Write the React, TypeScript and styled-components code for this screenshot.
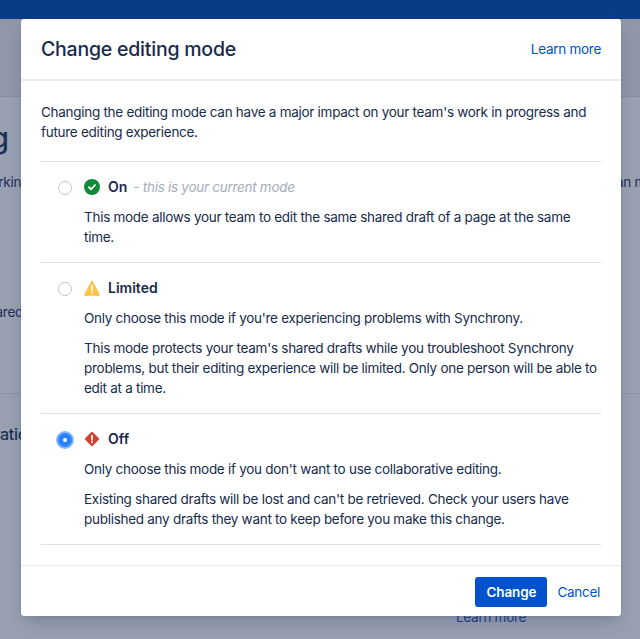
import React from "react";
import styled, {createGlobalStyle} from "styled-components";

const GlobalStyle = createGlobalStyle`
    html, body {
        margin: 0;
        padding: 0;
        background: #9aa2b3;
    }
    body {
        font-family: Inter, "Liberation Sans", sans-serif;
        font-size: 13.5px;
        letter-spacing: -0.28px;
        line-height: 20px;
        color: #172b4d;
    }
`;

const Page = styled.div`
    position: relative;
    width: 640px;
    height: 639px;
    overflow: hidden;
    display: flex;
    flex-direction: column;
    background: #98a0b1;
`;

const TopBar = styled.div`
    height: 19px;
    flex: none;
    background: #0a3b85;
`;

const PageHead = styled.div`
    height: 77px;
    flex: none;
    background: #8f97a8;
    border-bottom: 1px solid #868e9f;
`;

const PageSection = styled.div<{$height: number}>`
    height: ${p => p.$height}px;
    flex: none;
    display: flex;
    flex-direction: column;
    border-bottom: 1px solid #8a92a3;
    color: #1d3056;
`;

const PageHeading = styled.div`
    font-size: 29px;
    line-height: 36px;
    font-weight: 500;
    margin: 23px 0 0 -9px;
`;

const PageRow = styled.div<{$top: number}>`
    display: flex;
    justify-content: space-between;
    margin-top: ${p => p.$top}px;
    white-space: nowrap;
`;

const SlippedLeft = styled.span<{$shift: number}>`
    margin-left: ${p => p.$shift}px;
`;

const SlippedRight = styled.span`
    margin-right: -6px;
`;

const SectionTitle = styled.div`
    font-size: 16px;
    line-height: 24px;
    font-weight: 500;
    margin: 28px 0 0 -62px;
    white-space: nowrap;
    color: #1d3056;
`;

const PageFooterLink = styled.div`
    margin: 0 0 0 456px;
    color: #1f4488;
`;

const Modal = styled.div`
    position: absolute;
    left: 21px;
    top: 19px;
    width: 600px;
    height: 597px;
    display: flex;
    flex-direction: column;
    background: #fff;
    border-radius: 3px;
    box-shadow: 0 0 1px rgba(9, 30, 66, 0.31), 0 8px 16px -4px rgba(9, 30, 66, 0.25);
`;

const ModalHeader = styled.header`
    flex: none;
    height: 60px;
    padding: 0 20px;
    display: flex;
    align-items: center;
    justify-content: space-between;
    border-bottom: 2px solid #ebecf0;
`;

const ModalTitle = styled.h2`
    margin: 0;
    font-size: 19.5px;
    letter-spacing: -0.22px;
    line-height: 24px;
    font-weight: 500;
    color: #172b4d;
`;

const TextLink = styled.a`
    color: #0052cc;
    text-decoration: none;
`;

const ModalBody = styled.div`
    flex: 1;
    padding: 21px 20px 20px;
    display: flex;
    flex-direction: column;
`;

const Intro = styled.p`
    margin: 0 0 19px;
`;

const ModeOption = styled.section`
    border-top: 1px solid #dfe1e6;
    padding: 15px 0 15px 17px;
    &:last-child {
        border-bottom: 1px solid #dfe1e6;
    }
`;

const OptionHead = styled.div`
    display: flex;
    align-items: center;
    height: 20px;
`;

const Radio = styled.span<{$checked?: boolean}>`
    flex: none;
    box-sizing: border-box;
    width: 14px;
    height: 14px;
    margin: 1px 12px 0 0;
    border-radius: 50%;
    background: #fff;
    border: 1px solid #c1c7d0;
    ${p => p.$checked && `
        border: 5px solid #2684ff;
        box-shadow: 0 0 0 2px #8ab8fb;
    `}
`;

const StatusIcon = styled.svg`
    flex: none;
    width: 16px;
    height: 16px;
    margin-right: 8px;
`;

const ModeName = styled.strong`
    font-size: 14px;
    letter-spacing: 0;
    font-weight: 600;
`;

const ModeNote = styled.em`
    margin-left: 6px;
    color: #a5adba;
    font-style: italic;
`;

const OptionText = styled.div`
    margin: 10px 0 0 26px;
    display: flex;
    flex-direction: column;
    gap: 10px;
    p {
        margin: 0;
    }
`;

const ModalFooter = styled.footer`
    flex: none;
    box-sizing: border-box;
    height: 51px;
    padding: 2px 21px 0 0;
    display: flex;
    align-items: center;
    justify-content: flex-end;
    gap: 10px;
    border-top: 1px solid #ebecf0;
`;

const PrimaryButton = styled.button`
    width: 72px;
    height: 30px;
    padding: 0;
    border: 0;
    border-radius: 3px;
    background: #0052cc;
    color: #fff;
    font: 600 13.5px/20px Inter, "Liberation Sans", sans-serif;
    letter-spacing: -0.1px;
`;

const OnIcon = () => (
    <StatusIcon viewBox="0 0 16 16">
        <circle cx="8" cy="8" r="8" fill="#108a38"/>
        <path d="M4.9 8.2l2.1 2.1 4-4.3" fill="none" stroke="#fff" strokeWidth="1.8" strokeLinecap="round" strokeLinejoin="round"/>
    </StatusIcon>
);

const WarningIcon = () => (
    <StatusIcon viewBox="0 0 16 16">
        <path d="M8 .8L15.6 15.2H.4z" fill="#ffc440" stroke="#ffc440" strokeWidth="1" strokeLinejoin="round"/>
        <path d="M8 5.4v4.6" stroke="#fff" strokeWidth="1.8" strokeLinecap="round"/>
        <circle cx="8" cy="12.6" r="1" fill="#fff"/>
    </StatusIcon>
);

const ErrorIcon = () => (
    <StatusIcon viewBox="0 0 16 16">
        <rect x="2.6" y="2.6" width="10.8" height="10.8" rx="1.2" fill="#d2402c" transform="rotate(45 8 8)"/>
        <path d="M8 4.6v4.2" stroke="#fff" strokeWidth="1.7" strokeLinecap="round"/>
        <circle cx="8" cy="11.2" r="1" fill="#fff"/>
    </StatusIcon>
);

export default function App() {
    return (
        <Page>
            <GlobalStyle/>
            <TopBar/>
            <PageHead/>
            <PageSection $height={296}>
                <PageHeading>g</PageHeading>
                <PageRow $top={16}>
                    <SlippedLeft $shift={-20}>working</SlippedLeft>
                    <SlippedRight>can m</SlippedRight>
                </PageRow>
                <PageRow $top={110}>
                    <SlippedLeft $shift={-19}>shared</SlippedLeft>
                </PageRow>
            </PageSection>
            <SectionTitle>Collaboration</SectionTitle>
            <PageRow $top={161}>
                <PageFooterLink>Learn more</PageFooterLink>
            </PageRow>
            <Modal>
                <ModalHeader>
                    <ModalTitle>Change editing mode</ModalTitle>
                    <TextLink href="#">Learn more</TextLink>
                </ModalHeader>
                <ModalBody>
                    <Intro>Changing the editing mode can have a major impact on your team's work in progress and future editing experience.</Intro>
                    <ModeOption>
                        <OptionHead>
                            <Radio/>
                            <OnIcon/>
                            <ModeName>On</ModeName>
                            <ModeNote>- this is your current mode</ModeNote>
                        </OptionHead>
                        <OptionText>
                            <p>This mode allows your team to edit the same shared draft of a page at the same time.</p>
                        </OptionText>
                    </ModeOption>
                    <ModeOption>
                        <OptionHead>
                            <Radio/>
                            <WarningIcon/>
                            <ModeName>Limited</ModeName>
                        </OptionHead>
                        <OptionText>
                            <p>Only choose this mode if you're experiencing problems with Synchrony.</p>
                            <p>This mode protects your team's shared drafts while you troubleshoot Synchrony problems, but their editing experience will be limited. Only one person will be able to edit at a time.</p>
                        </OptionText>
                    </ModeOption>
                    <ModeOption>
                        <OptionHead>
                            <Radio $checked/>
                            <ErrorIcon/>
                            <ModeName>Off</ModeName>
                        </OptionHead>
                        <OptionText>
                            <p>Only choose this mode if you don't want to use collaborative editing.</p>
                            <p>Existing shared drafts will be lost and can't be retrieved. Check your users have published any drafts they want to keep before you make this change.</p>
                        </OptionText>
                    </ModeOption>
                </ModalBody>
                <ModalFooter>
                    <PrimaryButton>Change</PrimaryButton>
                    <TextLink href="#">Cancel</TextLink>
                </ModalFooter>
            </Modal>
        </Page>
    );
}
